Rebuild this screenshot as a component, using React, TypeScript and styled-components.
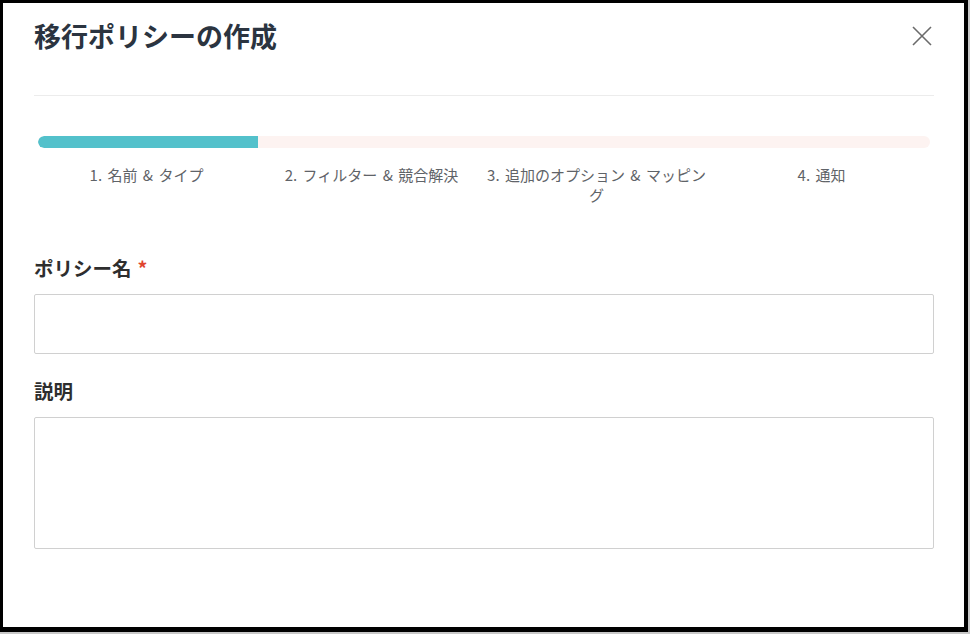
import React from "react";
import styled, { createGlobalStyle } from "styled-components";

const GlobalStyle = createGlobalStyle`
  html, body {
    margin: 0;
    padding: 0;
    background: #c8c8c8;
  }
  body {
    font-family: "Noto Sans CJK JP", "Noto Sans", sans-serif;
  }
  * { box-sizing: border-box; }
`;

const Modal = styled.div`
  width: 968px;
  height: 632px;
  background: #ffffff;
  border-style: solid;
  border-color: #000000;
  border-width: 3px 4px 5px 3px;
  padding: 0 30px 0 31px;
  display: flex;
  flex-direction: column;
`;

const Header = styled.div`
  display: flex;
  align-items: center;
  justify-content: space-between;
  padding: 13px 0 39px;
  border-bottom: 1px solid #ececec;
`;

const Title = styled.h1`
  margin: 0;
  font-size: 27px;
  line-height: 40px;
  font-weight: 700;
  color: #2b3440;
  letter-spacing: 0;
`;

const CloseButton = styled.button`
  border: 0;
  background: transparent;
  padding: 0;
  width: 24px;
  height: 24px;
  display: flex;
  align-items: center;
  justify-content: center;
  cursor: pointer;
  color: #6b6b6b;
`;

const Progress = styled.div`
  margin: 40px 4px 0;
  height: 12px;
  border-radius: 6px;
  background: #fdf3f1;
  overflow: hidden;
`;

const ProgressFill = styled.div`
  height: 100%;
  background: #53c1cb;
  border-radius: 6px 0 0 6px;
`;

const Steps = styled.div`
  display: grid;
  grid-template-columns: repeat(4, 1fr);
  margin-top: 17px;
`;

const Step = styled.div`
  text-align: center;
  font-size: 15px;
  line-height: 20px;
  color: #5f6368;
  word-spacing: 2px;
`;

const Field = styled.div`
  display: flex;
  flex-direction: column;
  margin-top: ${(p: { $top: number }) => p.$top}px;
`;

const Label = styled.label`
  font-size: 19.5px;
  line-height: 28px;
  font-weight: 700;
  color: #2e2e2e;
  margin-bottom: 12px;
`;

const Required = styled.span`
  color: #e0442f;
  margin-left: 6px;
`;

const TextInput = styled.input`
  height: 60px;
  width: 100%;
  border: 1px solid #d0d0d0;
  border-radius: 2px;
  font: inherit;
  padding: 0 12px;
  outline: none;
`;

const TextArea = styled.textarea`
  height: 132px;
  width: 100%;
  border: 1px solid #d0d0d0;
  border-radius: 2px;
  font: inherit;
  padding: 10px 12px;
  resize: none;
  outline: none;
`;

const steps = [
  "1. 名前 & タイプ",
  "2. フィルター & 競合解決",
  "3. 追加のオプション & マッピング",
  "4. 通知",
];

export default function App() {
  const current = 1;
  return (
    <>
      <GlobalStyle />
      <Modal>
        <Header>
          <Title>移行ポリシーの作成</Title>
          <CloseButton aria-label="close">
            <svg width="24" height="24" viewBox="0 0 24 24" fill="none">
              <path d="M3 3 L21 21 M21 3 L3 21" stroke="currentColor" strokeWidth="1.6" />
            </svg>
          </CloseButton>
        </Header>
        <Progress>
          <ProgressFill style={{ width: `${(current / steps.length) * 100 - 0.3}%` }} />
        </Progress>
        <Steps>
          {steps.map((s) => (
            <Step key={s}>{s}</Step>
          ))}
        </Steps>
        <Field $top={49}>
          <Label>
            ポリシー名<Required>*</Required>
          </Label>
          <TextInput />
        </Field>
        <Field $top={23}>
          <Label>説明</Label>
          <TextArea />
        </Field>
      </Modal>
    </>
  );
}
